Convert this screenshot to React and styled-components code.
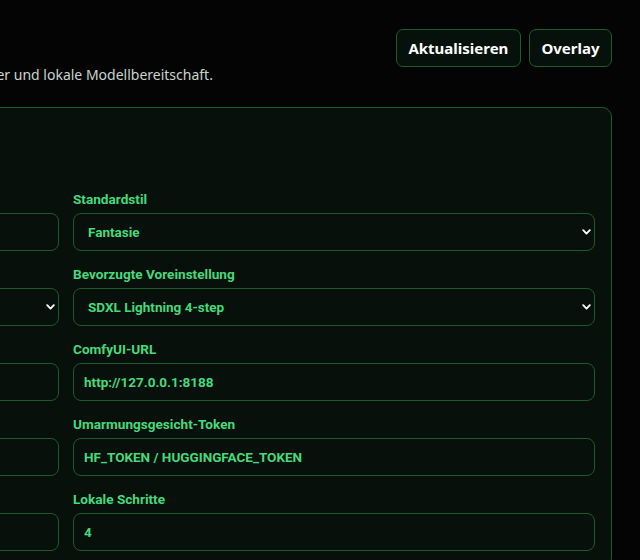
import React from "react";
import styled, { createGlobalStyle } from "styled-components";

const GlobalStyle = createGlobalStyle`
  html, body {
    margin: 0;
    padding: 0;
    background: #030403;
    overflow: hidden;
  }
  * { box-sizing: border-box; }
`;

const font = `"Noto Sans", "Open Sans", "Liberation Sans", sans-serif`;
const fieldFont = `Roboto, "Noto Sans", "Liberation Sans", sans-serif`;

const Viewport = styled.div`
  width: 100vw;
  height: 100vh;
  display: flex;
  justify-content: flex-end;
  overflow: hidden;
  font-family: ${font};
`;

const Page = styled.main`
  flex: 0 0 1148px;
  padding: 29px 28px 28px;
  display: flex;
  flex-direction: column;
  gap: 22px;
`;

const Header = styled.header`
  display: flex;
  justify-content: space-between;
  align-items: flex-start;
`;

const TitleBlock = styled.div`
  display: flex;
  flex-direction: column;
  gap: 4px;
`;

const Title = styled.h1`
  margin: 0;
  font-size: 26px;
  line-height: 32px;
  font-weight: 700;
  color: #f2f5f3;
`;

const Subtitle = styled.p`
  margin: 0;
  font-size: 14px;
  line-height: 20px;
  color: #c9d6d0;
`;

const Actions = styled.div`
  display: flex;
  gap: 8px;
`;

const Button = styled.button`
  height: 38px;
  padding: 0 11.5px;
  border: 1px solid #1f5a2b;
  border-radius: 7px;
  background: #07110b;
  color: #ffffff;
  font-family: ${font};
  font-size: 15px;
  font-weight: 700;
  cursor: pointer;
`;

const Panel = styled.section`
  border: 1px solid #1f5a2b;
  border-radius: 10px;
  background: #07100b;
  padding: 16px;
`;

const PanelHead = styled.div`
  height: 67px;
  display: flex;
  flex-direction: column;
  gap: 4px;
`;

const PanelTitle = styled.h2`
  margin: 0;
  font-size: 18px;
  line-height: 24px;
  color: #eaf2ec;
`;

const PanelNote = styled.p`
  margin: 0;
  font-size: 13px;
  line-height: 18px;
  color: #9fb1a7;
`;

const FieldGrid = styled.div`
  display: grid;
  grid-template-columns: 1fr 1fr;
  column-gap: 14px;
  row-gap: 15px;
`;

const Field = styled.label`
  display: flex;
  flex-direction: column;
  gap: 6px;
`;

const Label = styled.span`
  font-family: ${fieldFont};
  font-size: 13.6px;
  line-height: 16px;
  font-weight: 700;
  color: #45d97c;
`;

const controlStyle = `
  width: 100%;
  height: 38px;
  border: 1px solid #1f5a2b;
  border-radius: 8px;
  background: #07100b;
  color: #45d97c;
  font-family: ${fieldFont};
  font-size: 13.5px;
  font-weight: 700;
  outline: none;
`;

const Input = styled.input`
  ${controlStyle}
  padding: 0 10px;
`;

const SelectWrap = styled.div`
  position: relative;
`;

const Select = styled.select`
  ${controlStyle}
  appearance: none;
  padding: 0 28px 0 14px;
`;

const Chevron = styled.svg`
  position: absolute;
  right: 4px;
  top: 50%;
  width: 9px;
  height: 6px;
  margin-top: -3px;
  pointer-events: none;
`;

function SelectField({ value, options }) {
  return (
    <SelectWrap>
      <Select defaultValue={value}>
        {options.map((o) => (
          <option key={o}>{o}</option>
        ))}
      </Select>
      <Chevron viewBox="0 0 9 6">
        <path d="M1.2 1.2 L4.5 4.6 L7.8 1.2" fill="none" stroke="#ffffff" strokeWidth="1.9" strokeLinecap="round" strokeLinejoin="round" />
      </Chevron>
    </SelectWrap>
  );
}

const fields = [
  { label: "Standardmodell", value: "sdxl_lightning_4step.safetensors" },
  { label: "Standardstil", value: "Fantasie", options: ["Fantasie", "Realistisch", "Anime", "Cinematisch"] },
  { label: "Bildgröße", value: "1024 × 1024", options: ["1024 × 1024", "768 × 1344", "1344 × 768"] },
  { label: "Bevorzugte Voreinstellung", value: "SDXL Lightning 4-step", options: ["SDXL Lightning 4-step", "SDXL Turbo", "SD 1.5"] },
  { label: "Ausgabeordner", value: "./ausgabe" },
  { label: "ComfyUI-URL", value: "http://127.0.0.1:8188" },
  { label: "Modellordner", value: "./modelle" },
  { label: "Umarmungsgesicht-Token", value: "HF_TOKEN / HUGGINGFACE_TOKEN" },
  { label: "CFG-Skala", value: "1.5" },
  { label: "Lokale Schritte", value: "4" },
];

export default function App() {
  return (
    <>
      <GlobalStyle />
      <Viewport>
        <Page>
          <Header>
            <TitleBlock>
              <Title>Einstellungen</Title>
              <Subtitle>Standardwerte für Bildgenerierung, Voreinstellungen, den ComfyUI-Server und lokale Modellbereitschaft.</Subtitle>
            </TitleBlock>
            <Actions>
              <Button>Aktualisieren</Button>
              <Button>Overlay</Button>
            </Actions>
          </Header>
          <Panel>
            <PanelHead>
              <PanelTitle>Generierung</PanelTitle>
              <PanelNote>Lokale Standardwerte</PanelNote>
            </PanelHead>
            <FieldGrid>
              {fields.map((f) => (
                <Field key={f.label}>
                  <Label>{f.label}</Label>
                  {f.options ? (
                    <SelectField value={f.value} options={f.options} />
                  ) : (
                    <Input defaultValue={f.value} />
                  )}
                </Field>
              ))}
            </FieldGrid>
          </Panel>
        </Page>
      </Viewport>
    </>
  );
}
